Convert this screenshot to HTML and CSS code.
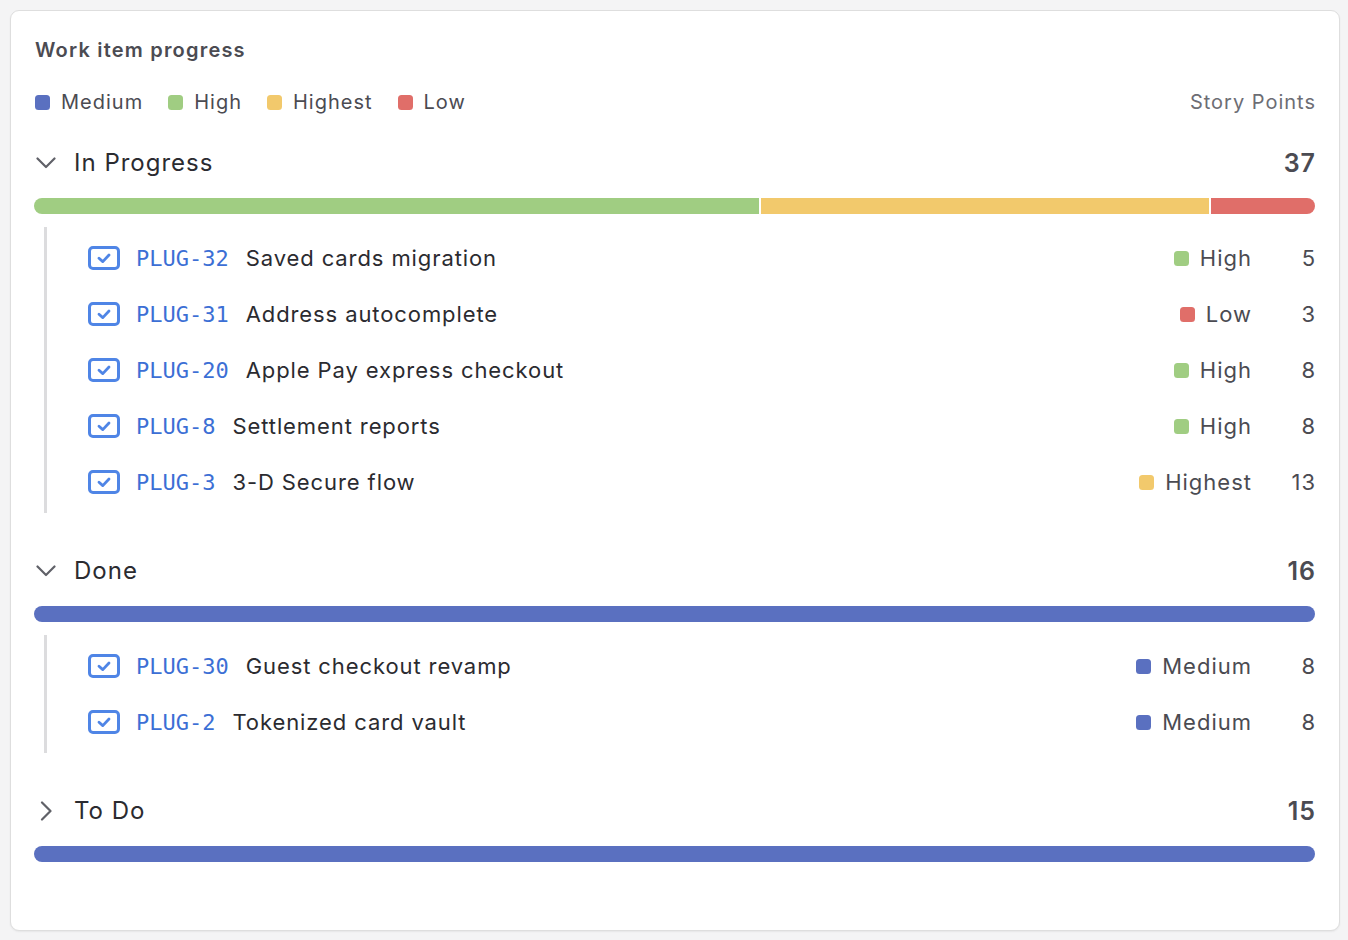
FILE: index.html
```html
<!DOCTYPE html>
<html lang="en">
<head>
<meta charset="utf-8">
<title>Work item progress</title>
<link rel="stylesheet" href="styles.css">
</head>
<body>
<div class="page">
  <section class="card">
    <h2 class="card-title">Work item progress</h2>

    <div class="legend-row">
      <ul class="legend">
        <li><span class="dot medium"></span>Medium</li>
        <li><span class="dot high"></span>High</li>
        <li><span class="dot highest"></span>Highest</li>
        <li><span class="dot low"></span>Low</li>
      </ul>
      <span class="unit">Story Points</span>
    </div>

    <!-- In Progress -->
    <div class="group">
      <div class="group-head">
        <svg class="chev" viewBox="0 0 20 20" width="20" height="20"><path d="M1.5 5.5 L10 14 L18.5 5.5" fill="none" stroke="currentColor" stroke-width="2.2" stroke-linecap="round" stroke-linejoin="round"/></svg>
        <span class="group-name">In Progress</span>
        <span class="group-total">37</span>
      </div>
      <div class="bar">
        <span class="seg high" style="flex: 21"></span>
        <span class="seg highest" style="flex: 13"></span>
        <span class="seg low" style="flex: 3"></span>
      </div>
      <ul class="items">
        <li class="item">
          <svg class="task" viewBox="0 0 32 24" width="32" height="24"><rect x="1.5" y="1.5" width="29" height="21" rx="3.5" fill="none" stroke="currentColor" stroke-width="3"/><path d="M11 12.2 L14.8 15.6 L21 9" fill="none" stroke="currentColor" stroke-width="2.8" stroke-linecap="round" stroke-linejoin="round"/></svg>
          <span class="key">PLUG-32</span>
          <span class="summary">Saved cards migration</span>
          <span class="prio"><span class="dot high"></span>High</span>
          <span class="pts">5</span>
        </li>
        <li class="item">
          <svg class="task" viewBox="0 0 32 24" width="32" height="24"><rect x="1.5" y="1.5" width="29" height="21" rx="3.5" fill="none" stroke="currentColor" stroke-width="3"/><path d="M11 12.2 L14.8 15.6 L21 9" fill="none" stroke="currentColor" stroke-width="2.8" stroke-linecap="round" stroke-linejoin="round"/></svg>
          <span class="key">PLUG-31</span>
          <span class="summary">Address autocomplete</span>
          <span class="prio"><span class="dot low"></span>Low</span>
          <span class="pts">3</span>
        </li>
        <li class="item">
          <svg class="task" viewBox="0 0 32 24" width="32" height="24"><rect x="1.5" y="1.5" width="29" height="21" rx="3.5" fill="none" stroke="currentColor" stroke-width="3"/><path d="M11 12.2 L14.8 15.6 L21 9" fill="none" stroke="currentColor" stroke-width="2.8" stroke-linecap="round" stroke-linejoin="round"/></svg>
          <span class="key">PLUG-20</span>
          <span class="summary">Apple Pay express checkout</span>
          <span class="prio"><span class="dot high"></span>High</span>
          <span class="pts">8</span>
        </li>
        <li class="item">
          <svg class="task" viewBox="0 0 32 24" width="32" height="24"><rect x="1.5" y="1.5" width="29" height="21" rx="3.5" fill="none" stroke="currentColor" stroke-width="3"/><path d="M11 12.2 L14.8 15.6 L21 9" fill="none" stroke="currentColor" stroke-width="2.8" stroke-linecap="round" stroke-linejoin="round"/></svg>
          <span class="key">PLUG-8</span>
          <span class="summary">Settlement reports</span>
          <span class="prio"><span class="dot high"></span>High</span>
          <span class="pts">8</span>
        </li>
        <li class="item">
          <svg class="task" viewBox="0 0 32 24" width="32" height="24"><rect x="1.5" y="1.5" width="29" height="21" rx="3.5" fill="none" stroke="currentColor" stroke-width="3"/><path d="M11 12.2 L14.8 15.6 L21 9" fill="none" stroke="currentColor" stroke-width="2.8" stroke-linecap="round" stroke-linejoin="round"/></svg>
          <span class="key">PLUG-3</span>
          <span class="summary">3-D Secure flow</span>
          <span class="prio"><span class="dot highest"></span>Highest</span>
          <span class="pts">13</span>
        </li>
      </ul>
    </div>

    <!-- Done -->
    <div class="group">
      <div class="group-head">
        <svg class="chev" viewBox="0 0 20 20" width="20" height="20"><path d="M1.5 5.5 L10 14 L18.5 5.5" fill="none" stroke="currentColor" stroke-width="2.2" stroke-linecap="round" stroke-linejoin="round"/></svg>
        <span class="group-name">Done</span>
        <span class="group-total">16</span>
      </div>
      <div class="bar">
        <span class="seg medium" style="flex: 16"></span>
      </div>
      <ul class="items">
        <li class="item">
          <svg class="task" viewBox="0 0 32 24" width="32" height="24"><rect x="1.5" y="1.5" width="29" height="21" rx="3.5" fill="none" stroke="currentColor" stroke-width="3"/><path d="M11 12.2 L14.8 15.6 L21 9" fill="none" stroke="currentColor" stroke-width="2.8" stroke-linecap="round" stroke-linejoin="round"/></svg>
          <span class="key">PLUG-30</span>
          <span class="summary">Guest checkout revamp</span>
          <span class="prio"><span class="dot medium"></span>Medium</span>
          <span class="pts">8</span>
        </li>
        <li class="item">
          <svg class="task" viewBox="0 0 32 24" width="32" height="24"><rect x="1.5" y="1.5" width="29" height="21" rx="3.5" fill="none" stroke="currentColor" stroke-width="3"/><path d="M11 12.2 L14.8 15.6 L21 9" fill="none" stroke="currentColor" stroke-width="2.8" stroke-linecap="round" stroke-linejoin="round"/></svg>
          <span class="key">PLUG-2</span>
          <span class="summary">Tokenized card vault</span>
          <span class="prio"><span class="dot medium"></span>Medium</span>
          <span class="pts">8</span>
        </li>
      </ul>
    </div>

    <!-- To Do (collapsed) -->
    <div class="group collapsed">
      <div class="group-head">
        <svg class="chev" viewBox="0 0 20 20" width="20" height="20"><path d="M6 1.5 L14.5 10 L6 18.5" fill="none" stroke="currentColor" stroke-width="2.2" stroke-linecap="round" stroke-linejoin="round"/></svg>
        <span class="group-name">To Do</span>
        <span class="group-total">15</span>
      </div>
      <div class="bar">
        <span class="seg medium" style="flex: 15"></span>
      </div>
    </div>
  </section>
</div>
</body>
</html>
```

FILE: styles.css
```css
* {
  box-sizing: border-box;
}

html, body {
  margin: 0;
  padding: 0;
  background: #f4f4f5;
}

body {
  font-family: Inter, "Noto Sans", "Liberation Sans", sans-serif;
  color: #2b2b30;
}

.page {
  padding: 10px 9px 9px 10px;
}

.card {
  width: 1330px;
  height: 921px;
  background: #ffffff;
  border: 1px solid #dedede;
  border-radius: 9px;
  box-shadow: 0 1px 2px rgba(0, 0, 0, 0.06);
  padding: 27px 24px 0 23px;
}

.card-title {
  margin: 0 0 0 1px;
  font-size: 20px;
  line-height: 24px;
  font-weight: 600;
  letter-spacing: 1.2px;
  color: #4b4b52;
}

/* legend */
.legend-row {
  margin-top: 28px;
  margin-left: 1px;
  display: flex;
  align-items: center;
  justify-content: space-between;
  height: 24px;
}

.legend {
  list-style: none;
  margin: 0;
  padding: 0;
  display: flex;
  gap: 25px;
}

.legend li {
  display: flex;
  align-items: center;
  gap: 11px;
  font-size: 20px;
  line-height: 24px;
  letter-spacing: 1px;
  color: #4b4b52;
}

.unit {
  font-size: 20px;
  letter-spacing: 1px;
  margin-right: -1px;
  color: #6d6d74;
}

.dot {
  display: inline-block;
  width: 15px;
  height: 15px;
  border-radius: 3.5px;
  flex: none;
}

.medium { background: #5a70c0; }
.high { background: #a0cd82; }
.highest { background: #f2c96c; }
.low { background: #e06e69; }

/* groups */
.group {
  margin-top: 34px;
}

.group + .group {
  margin-top: 43px;
}

.group-head {
  display: flex;
  align-items: center;
  height: 30px;
}

.chev {
  color: #606168;
  margin-left: 2px;
  width: 20px;
  height: 20px;
}

.group-name {
  margin-left: 18px;
  font-size: 24px;
  line-height: 30px;
  letter-spacing: 1px;
  color: #2b2b30;
}

.group-total {
  margin-left: auto;
  margin-right: -1px;
  font-size: 25px;
  font-weight: 600;
  letter-spacing: 1px;
  color: #4b4b52;
}

.bar {
  margin-top: 20px;
  height: 16px;
  border-radius: 8px;
  overflow: hidden;
  display: flex;
  gap: 2px;
}

.seg {
  display: block;
  height: 100%;
}

/* item list */
.items {
  list-style: none;
  margin: 13px 0 0 10px;
  padding: 3px 0 3px 41px;
  border-left: 3px solid #dcdcde;
}

.item {
  display: flex;
  align-items: center;
  height: 56px;
}

.task {
  color: #4f85e6;
  flex: none;
}

.key {
  margin-left: 16px;
  font-family: "DejaVu Sans Mono", "Liberation Mono", monospace;
  font-size: 22px;
  color: #3c6fd5;
}

.summary {
  margin-left: 17px;
  font-size: 22px;
  letter-spacing: 0.9px;
  color: #2b2b30;
}

.prio {
  margin-left: auto;
  display: flex;
  align-items: center;
  gap: 11px;
  font-size: 22px;
  letter-spacing: 1px;
  color: #4b4b52;
}

.pts {
  width: 64px;
  margin-right: -1px;
  text-align: right;
  font-size: 22px;
  letter-spacing: 1px;
  color: #4b4b52;
}
```
